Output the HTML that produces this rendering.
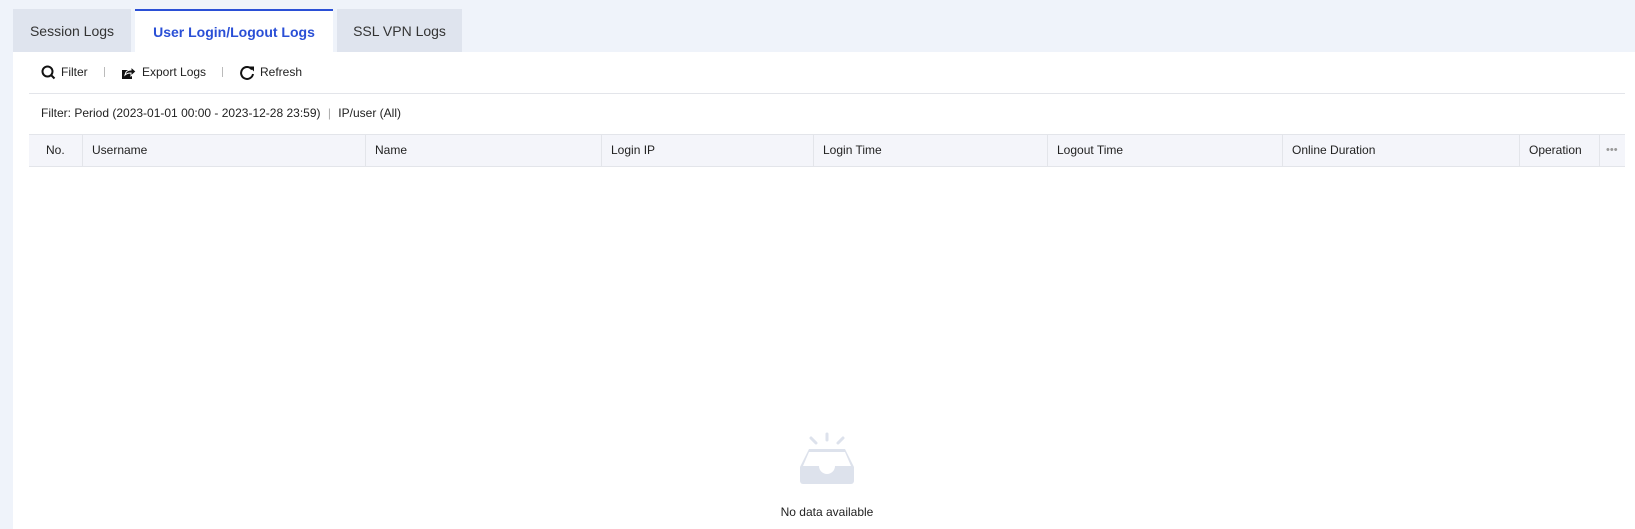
<!DOCTYPE html>
<html><head><style>
*{margin:0;padding:0;box-sizing:border-box}
body{width:1635px;height:529px;background:#eff3fa;font-family:"Liberation Sans",sans-serif;color:#222;position:relative;overflow:hidden;font-size:12px}
.tab{position:absolute;top:9px;height:43px;background:#dfe4ee;font-size:14px;color:#333;display:flex;align-items:center;justify-content:center}
.tab.a{background:#fff;color:#2a4fd6;font-weight:bold;border-top:2px solid #2a4fd6}
.panel{position:absolute;left:13px;top:52px;right:0;bottom:0;background:#fff}
.tb{position:absolute;top:63px;height:18px;display:flex;align-items:center;font-size:12px}
.sep{position:absolute;top:67px;width:1px;height:10px;background:#bbb}
.hr{position:absolute;left:29px;width:1596px;top:93px;height:1px;background:#e3e5ea}
.th{position:absolute;top:134px;height:33px;left:29px;width:1596px;background:#f4f5fa;border-top:1px solid #e3e5ea;border-bottom:1px solid #e3e5ea}
.c{position:absolute;top:0;height:31px;line-height:31px;padding-left:9px;border-left:1px solid #e3e5ea;font-size:12px}
</style></head><body>
<div class="tab" style="left:13px;width:118px">Session Logs</div>
<div class="tab a" style="left:135px;width:198px">User Login/Logout Logs</div>
<div class="tab" style="left:337px;width:125px">SSL VPN Logs</div>
<div class="panel"></div>
<div class="tb" style="left:41px"><svg width="15" height="15" viewBox="0 0 15 15"><circle cx="6.5" cy="6.5" r="5" fill="none" stroke="#111" stroke-width="2"/><path d="M10 10l3.5 3.5" stroke="#111" stroke-width="2"/></svg><span style="margin-left:5px">Filter</span></div>
<div class="sep" style="left:104px"></div>
<div class="tb" style="left:121px"><svg width="16" height="15" viewBox="0 0 16 15"><rect x="1" y="5" width="10" height="9" fill="#111"/><path d="M4 10 Q5 5 10 5 V2 L15 6.5 L10 11 V8 Q6 8 4 10Z" fill="#111" stroke="#fff" stroke-width="1"/></svg><span style="margin-left:5px">Export Logs</span></div>
<div class="sep" style="left:222px"></div>
<div class="tb" style="left:240px"><svg width="15" height="15" viewBox="0 0 15 15"><path d="M12 4.5A6 6 0 1 0 13 9" fill="none" stroke="#111" stroke-width="2"/><path d="M9 1.5h5v5z" fill="#111"/></svg><span style="margin-left:5px">Refresh</span></div>
<div class="hr"></div>
<div style="position:absolute;left:41px;top:106px;font-size:12px">Filter: Period (2023-01-01 00:00 - 2023-12-28 23:59) <span style="color:#aaa;margin:0 4px">|</span> IP/user (All)</div>
<div class="th">
<div class="c" style="left:0;width:53px;border-left:0;padding-left:17px">No.</div>
<div class="c" style="left:53px">Username</div>
<div class="c" style="left:336px">Name</div>
<div class="c" style="left:572px">Login IP</div>
<div class="c" style="left:784px">Login Time</div>
<div class="c" style="left:1018px">Logout Time</div>
<div class="c" style="left:1253px">Online Duration</div>
<div class="c" style="left:1490px">Operation</div>
<div class="c" style="left:1570px;width:26px;color:#999;padding-left:6px;font-size:11px">•••</div>
</div>
<svg style="position:absolute;left:797px;top:432px" width="60" height="52" viewBox="0 0 60 52">
<g stroke="#dde2ec" stroke-width="3" stroke-linecap="round"><path d="M30 2v6M14 6l5 5M46 6l-5 5"/></g>
<path d="M12 17h36l9 18v14a3 3 0 0 1-3 3H6a3 3 0 0 1-3-3V35z" fill="#dde2ec"/>
<path d="M12 20l-6 14h16a8 8 0 0 0 16 0h16l-6-14z" fill="#fff"/>
</svg>
<div style="position:absolute;left:0;width:1654px;text-align:center;top:505px;font-size:12px">No data available</div>
</body></html>
